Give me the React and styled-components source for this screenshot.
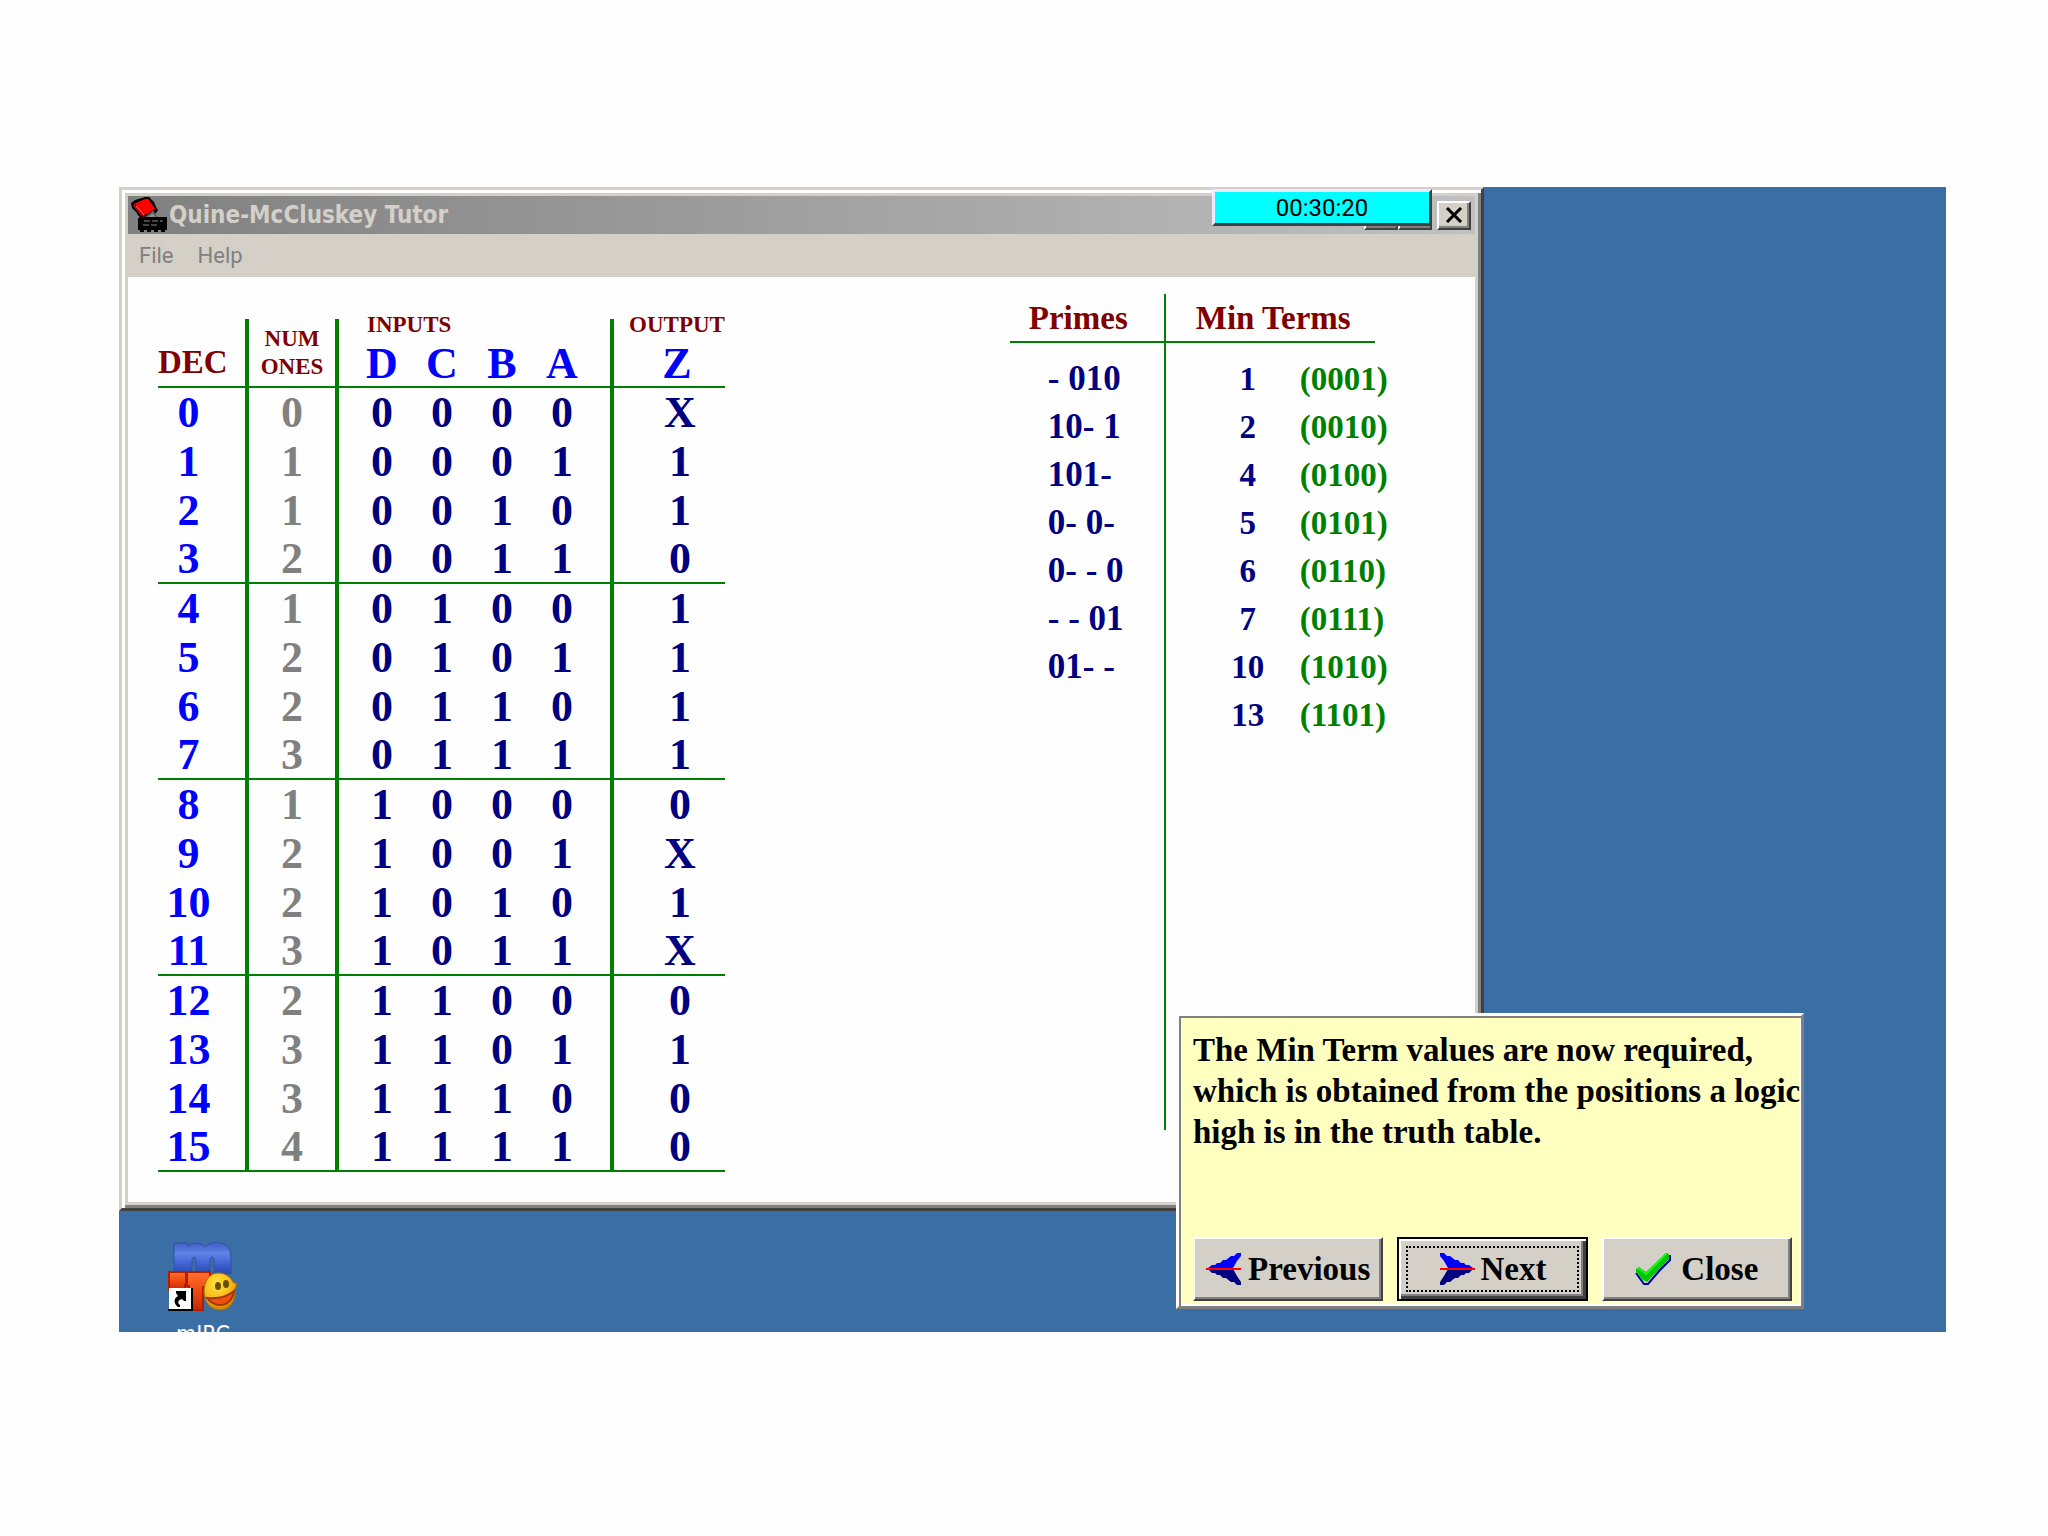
import styled, { createGlobalStyle } from "styled-components"

const GlobalStyle = createGlobalStyle`
  * {
    box-sizing: border-box;
  }
  body {
    margin: 0;
    background: #fefefe;
    font-family: "Liberation Serif", "Times New Roman", serif;
  }
`

const Desktop = styled.main`
  position: relative;
  margin: 187px 102px 40px 119px;
  background: #3a6ea5;
  overflow: hidden;
`

const Window = styled.section`
  width: 74.7%;
  background: #d4d0c8;
  border: 3px solid;
  border-color: #d4d0c8 #404040 #404040 #d4d0c8;
  box-shadow: inset 3px 3px 0 #fff, inset -3px -3px 0 #808080;
  padding: 6px;
`

const TitleBar = styled.header`
  display: flex;
  align-items: center;
  height: 38px;
  padding: 0 4px 0 3px;
  background: linear-gradient(90deg, #808080, #c0c0c0);
  h1 {
    flex: 1;
    margin: 0 0 0 2px;
    color: #d4d0c8;
    font: bold 24px "DejaVu Sans Condensed", "DejaVu Sans", sans-serif;
  }
`

const CaptionButton = styled.button`
  display: flex;
  align-items: center;
  justify-content: center;
  width: 34px;
  height: 29px;
  padding: 0;
  margin-left: ${p => (p.$gap ? 5 : 0)}px;
  background: #d4d0c8;
  border: 2px solid;
  border-color: #fff #404040 #404040 #fff;
  box-shadow: inset -2px -2px 0 #808080;
`

const MenuBar = styled.nav`
  display: flex;
  align-items: center;
  gap: 24px;
  height: 43px;
  padding: 0 11px;
  button {
    padding: 0;
    border: 0;
    background: none;
    color: #808080;
    font: 22px Roboto, sans-serif;
  }
`

const Client = styled.div`
  display: flex;
  justify-content: space-between;
  align-items: flex-start;
  min-height: 925px;
  padding: 17px 100px 0 30px;
  background: #fefefe;
`

const TruthTable = styled.table`
  margin-top: 25px;
  border-spacing: 0;
  table-layout: fixed;
  width: 567px;
  text-align: center;
  font-weight: bold;
`

/* side paddings that keep the digits on their column axis */
const columnPadding = {
  dec: "0 26px 0 0",
  ones: "0",
  D: "0 0 0 13px",
  C: "0",
  B: "0",
  A: "0 18px 0 0",
  z: "0 0 0 21px",
}

const HeadCell = styled.th`
  height: 69px;
  padding: ${p => p.$pad || "0"};
  vertical-align: bottom;
  border-bottom: 2px solid #008000;
  border-right: ${p => (p.$line ? "4px solid #008000" : "0")};
  color: #800000;
  font-size: ${p => (p.$big ? 33 : 23)}px;
  line-height: 28px;
  text-align: ${p => p.$align || "center"};
  span {
    display: block;
    color: #0000ff;
    font-size: 44px;
    line-height: 45px;
  }
`

const GroupTitle = styled.div`
  height: 22px;
  line-height: 12px;
  padding-left: ${p => p.$indent || 0}px;
  white-space: nowrap;
`

const Cell = styled.td`
  height: 49px;
  padding: ${p => columnPadding[p.$col]};
  font-size: 44px;
  line-height: 44px;
  color: ${p => p.$color || "#000080"};
  border-right: ${p => (p.$line ? "4px solid #008000" : "0")};
  border-bottom: ${p => (p.$last ? "2px solid #008000" : "0")};
`

const Results = styled.div`
  display: flex;
  width: 365px;
  height: 836px;
`

const ResultTable = styled.table`
  height: fit-content;
  border-spacing: 0;
  font-size: 33px;
  font-weight: bold;
  th {
    height: 49px;
    padding: 0;
    border-bottom: 2px solid #008000;
    color: #800000;
    line-height: 36px;
  }
  td {
    height: 48px;
    padding: 0;
    line-height: 36px;
    color: #000080;
    white-space: pre;
  }
  tbody::before {
    content: "";
    display: block;
    height: 12px;
  }
`

const PrimeTable = styled(ResultTable)`
  width: 154px;
  th {
    padding-left: 19px;
    text-align: left;
  }
  td {
    padding-left: 38px;
    font-size: 35px;
  }
`

const MinTermPane = styled.div`
  flex: 1;
  border-left: 2px solid #008000;
`

const MinTermTable = styled(ResultTable)`
  width: 100%;
  table-layout: fixed;
  th {
    padding-left: 30px;
    text-align: left;
  }
  td:first-child {
    padding-left: 30px;
    text-align: center;
  }
  td:last-child {
    color: #008000;
  }
`

const Timer = styled.output`
  position: absolute;
  top: 2px;
  right: 514px;
  width: 220px;
  height: 37px;
  background: #00ffff;
  border: 3px solid;
  border-color: #f0e8ff #404040 #404040 #f0e8ff;
  color: #000;
  font: 24px/33px Roboto, sans-serif;
  text-align: center;
`

const Tip = styled.aside`
  position: absolute;
  right: 142px;
  bottom: 23px;
  display: flex;
  flex-direction: column;
  justify-content: space-between;
  width: 628px;
  height: 296px;
  padding: 14px 9px 5px 14px;
  background: #ffffc0;
  border: 3px solid;
  border-color: #fff #808080 #808080 #fff;
  box-shadow: inset 2px 2px 0 #808080, inset -2px -2px 0 #fff;
  p {
    margin: 0;
    color: #000;
    font-size: 33px;
    font-weight: bold;
    line-height: 41px;
    white-space: nowrap;
  }
`

const TipButtons = styled.div`
  display: flex;
  justify-content: space-between;
  gap: 14px;
`

const TipButton = styled.button`
  position: relative;
  flex: 1;
  display: flex;
  align-items: center;
  justify-content: center;
  gap: ${p => p.$gap || 6}px;
  height: 64px;
  padding: 0;
  background: #d4d0c8;
  border: 2px solid;
  border-color: ${p => (p.$focused ? "#000" : "#fff #404040 #404040 #fff")};
  box-shadow: ${p =>
    p.$focused
      ? "inset 2px 2px 0 #fff, inset -3px -3px 0 #404040, inset -5px -5px 0 #808080"
      : "inset -2px -2px 0 #808080"};
  color: #000;
  font: bold 33px "Liberation Serif", "Times New Roman", serif;
  &::after {
    content: "";
    display: ${p => (p.$focused ? "block" : "none")};
    position: absolute;
    inset: 7px;
    border: 2px dotted #000;
  }
`

const IconRow = styled.div`
  height: 121px;
  padding: 31px 0 0 49px;
  overflow: hidden;
`

const Shortcut = styled.a`
  display: flex;
  flex-direction: column;
  align-items: center;
  gap: 9px;
  width: 70px;
  color: #fff;
  font: 23px "DejaVu Sans Condensed", sans-serif;
  text-decoration: none;
`

const AppIcon = () => (
  <svg width="36" height="36" viewBox="0 0 36 36" aria-hidden="true">
    <path d="M0 6l4-3 7-2 3-1h4l5 5 2 5 2 3-2 3-8 6-3 2-5-3-4-6-4-4z" fill="#000" />
    <path d="M3 7l11-5h3l7 9-1 2-9 5-4-3z" fill="#f00" />
    <path d="M2 9l9 11 3-1v-2l-3-1L4 6z" fill="#b00000" />
    <path d="M5 9l8 9" stroke="#ff8080" strokeWidth="1" />
    <path d="M14 21l8-6 4 6" stroke="#606060" strokeWidth="2" fill="#909090" />
    <path d="M7 21h3v-1h26v13H7z" fill="#000" />
    <path d="M13 24h19M12 28h16" stroke="#8a8a8a" strokeWidth="1" strokeDasharray="6 2" />
    <path d="M9 34h26" stroke="#000" strokeWidth="2" strokeDasharray="4 3" />
  </svg>
)

const ArrowIcon = ({ flip }) => (
  <svg width="36" height="34" viewBox="0 0 36 34" aria-hidden="true">
    <g transform={flip ? "matrix(-1 0 0 1 36 0)" : undefined}>
      <path d="M2 16l4-3h3l2-2h3l3-3h3l5-4h3l3-3h4v3l-4 5-4 7z" fill="#00f" />
      <path d="M2 17h25l4 7 4 6v3h-4l-3-3h-3l-5-4h-3l-3-3h-3l-2-2H6z" fill="#000080" />
      <path d="M0 17h35" stroke="#f00" strokeWidth="2" />
    </g>
  </svg>
)

const CheckIcon = () => (
  <svg width="36" height="34" viewBox="0 0 36 34" aria-hidden="true">
    <path d="M1 21l8 11h4L25 18 35 8V3" fill="none" stroke="#0000a0" strokeWidth="2" />
    <path d="M1 17l3-2 7 5L31 1l3 1v5L12 30 8 28 1 20z" fill="#00c800" />
    <path d="M2 17l2-1 7 6L31 2" fill="none" stroke="#20f020" strokeWidth="2" />
  </svg>
)

const MircIcon = () => (
  <svg width="70" height="70" viewBox="0 0 70 70" aria-hidden="true">
    <defs>
      <linearGradient id="mBlue" x1="0" y1="0" x2="0" y2="1">
        <stop offset="0" stopColor="#3c5cc0" />
        <stop offset=".35" stopColor="#6084e8" />
        <stop offset=".7" stopColor="#4060d0" />
        <stop offset="1" stopColor="#2848a8" />
      </linearGradient>
      <linearGradient id="tRed" x1="0" y1="0" x2="0" y2="1">
        <stop offset="0" stopColor="#ff7030" />
        <stop offset=".5" stopColor="#f04810" />
        <stop offset="1" stopColor="#c82800" />
      </linearGradient>
      <radialGradient id="face" cx=".4" cy=".3" r=".7">
        <stop offset="0" stopColor="#ffe840" />
        <stop offset=".6" stopColor="#f8b818" />
        <stop offset="1" stopColor="#d08000" />
      </radialGradient>
    </defs>
    <path
      d="M6 32V1h14v3c5-4 13-4 17 1 6-6 15-6 20-2 5 3 6 8 6 14v15H46V18c0-4-4-4-4 0v14H28V18c0-4-4-4-4 0v14z"
      fill="url(#mBlue)"
      stroke="#3450a8"
    />
    <path d="M1 30h17v13h-1v5H1z" fill="url(#tRed)" stroke="#b02000" strokeWidth="2" />
    <path d="M19 30h23v15h-7v23H21V44h-2z" fill="url(#tRed)" stroke="#b02000" strokeWidth="2" />
    <path
      d="M50 31c8 0 12 4 15 9l4 2-2 5c1 12-5 21-15 21-9 0-16-8-16-18s5-19 14-19z"
      fill="url(#face)"
      stroke="#a87000"
    />
    <ellipse cx="50" cy="44" rx="3" ry="4" fill="#6a5000" />
    <ellipse cx="58" cy="42" rx="3" ry="4" fill="#6a5000" />
    <path
      d="M39 56c10 1 20-1 27-7-1 9-7 14-14 14-6 0-10-3-13-7z"
      fill="#f05010"
      stroke="#a03800"
      strokeWidth="2"
    />
    <path d="M1 46h22v21H1z" fill="#fff" />
    <path d="M0 68h24V46" fill="none" stroke="#000" strokeWidth="2" />
    <path d="M8 49h10v10h-2l-2-2c-4 1-5 4-2 6v2h-2c-5-4-4-9 0-11l-2-3z" fill="#000" />
  </svg>
)

const inputs = ["D", "C", "B", "A"]
const outputs = ["X", 1, 1, 0, 1, 1, 1, 1, 0, "X", 1, "X", 0, 1, 0, 0]

const rows = outputs.map((z, dec) => {
  const bits = dec.toString(2).padStart(4, "0").split("")
  return { dec, bits, z, ones: bits.filter(b => b === "1").length }
})

const primes = ["- 010", "10- 1", "101-", "0- 0-", "0- - 0", "- - 01", "01- -"]
const minTerms = [1, 2, 4, 5, 6, 7, 10, 13]

const App = () => (
  <>
    <GlobalStyle />
    <Desktop>
      <Window>
        <TitleBar>
          <AppIcon />
          <h1>Quine-McCluskey Tutor</h1>
          <CaptionButton aria-label="Minimize" />
          <CaptionButton aria-label="Maximize" />
          <CaptionButton aria-label="Close window" $gap>
            <svg width="18" height="16" viewBox="0 0 18 16">
              <path d="M2 1l14 14M16 1L2 15" stroke="#000" strokeWidth="3" />
            </svg>
          </CaptionButton>
        </TitleBar>
        <MenuBar>
          <button>File</button>
          <button>Help</button>
        </MenuBar>
        <Client>
          <TruthTable>
            <colgroup>
              <col width="91" />
              <col width="90" />
              <col width="73" />
              <col width="60" />
              <col width="60" />
              <col width="82" />
              <col width="111" />
            </colgroup>
            <thead>
              <tr>
                <HeadCell $big $line $align="left" $pad="0 0 10px">
                  DEC
                </HeadCell>
                <HeadCell $line $pad="0 0 5px">
                  NUM
                  <br />
                  ONES
                </HeadCell>
                {inputs.map((name, i) => (
                  <HeadCell
                    key={name}
                    $line={i === 3}
                    $pad={columnPadding[name]}
                  >
                    {i === 0 && <GroupTitle $indent={15}>INPUTS</GroupTitle>}
                    <span>{name}</span>
                  </HeadCell>
                ))}
                <HeadCell $pad="0 0 0 15px">
                  <GroupTitle>OUTPUT</GroupTitle>
                  <span>Z</span>
                </HeadCell>
              </tr>
            </thead>
            <tbody>
              {rows.map(({ dec, ones, bits, z }) => {
                const last = dec % 4 === 3
                return (
                  <tr key={dec}>
                    <Cell $col="dec" $color="#0000ff" $line $last={last}>
                      {dec}
                    </Cell>
                    <Cell $col="ones" $color="#808080" $line $last={last}>
                      {ones}
                    </Cell>
                    {bits.map((bit, i) => (
                      <Cell
                        key={inputs[i]}
                        $col={inputs[i]}
                        $line={i === 3}
                        $last={last}
                      >
                        {bit}
                      </Cell>
                    ))}
                    <Cell $col="z" $last={last}>
                      {z}
                    </Cell>
                  </tr>
                )
              })}
            </tbody>
          </TruthTable>
          <Results>
            <PrimeTable>
              <thead>
                <tr>
                  <th>Primes</th>
                </tr>
              </thead>
              <tbody>
                {primes.map(p => (
                  <tr key={p}>
                    <td>{p}</td>
                  </tr>
                ))}
              </tbody>
            </PrimeTable>
            <MinTermPane>
              <MinTermTable>
                <colgroup>
                  <col width="134" />
                  <col />
                </colgroup>
                <thead>
                  <tr>
                    <th colSpan={2}>Min Terms</th>
                  </tr>
                </thead>
                <tbody>
                  {minTerms.map(n => (
                    <tr key={n}>
                      <td>{n}</td>
                      <td>({n.toString(2).padStart(4, "0")})</td>
                    </tr>
                  ))}
                </tbody>
              </MinTermTable>
            </MinTermPane>
          </Results>
        </Client>
      </Window>
      <IconRow>
        <Shortcut href="#mirc">
          <MircIcon />
          mIRC
        </Shortcut>
      </IconRow>
      <Timer>00:30:20</Timer>
      <Tip>
        <p>
          The Min Term values are now required,
          <br />
          which is obtained from the positions a logic
          <br />
          high is in the truth table.
        </p>
        <TipButtons>
          <TipButton>
            <ArrowIcon />
            Previous
          </TipButton>
          <TipButton $focused>
            <ArrowIcon flip />
            Next
          </TipButton>
          <TipButton $gap={10}>
            <CheckIcon />
            Close
          </TipButton>
        </TipButtons>
      </Tip>
    </Desktop>
  </>
)

export default App
